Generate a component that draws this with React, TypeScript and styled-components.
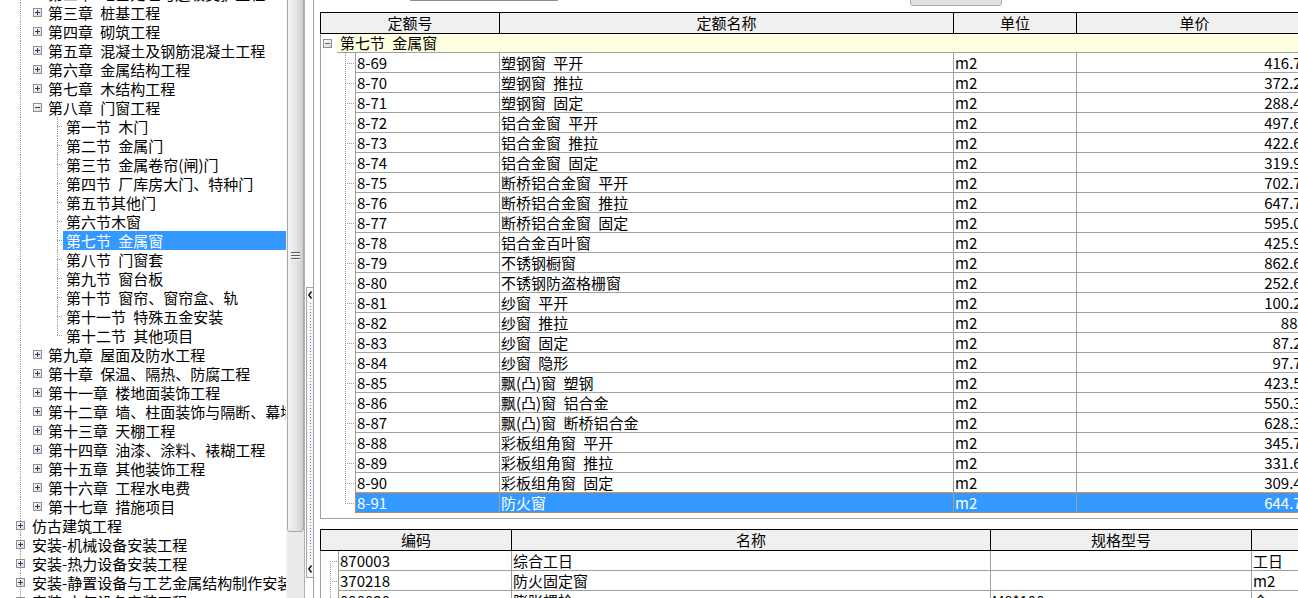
import React from "react";
import styled, { createGlobalStyle } from "styled-components";

const GlobalStyle = createGlobalStyle`
  html, body {
    margin: 0;
    padding: 0;
    background: #fff;
    overflow: hidden;
  }
  body {
    font-family: "Noto Sans CJK SC", "Noto Sans", sans-serif;
    font-size: 15px;
    color: #000;
  }
  * {
    box-sizing: border-box;
  }
`;

const GRID_LINE = "#a0a0a0";
const DOT = "#9a9a9a";
const vDots = `repeating-linear-gradient(to bottom, ${DOT} 0 1px, transparent 1px 2px)`;
const hDots = `repeating-linear-gradient(to right, ${DOT} 0 1px, transparent 1px 2px)`;

type VPart = "full" | "top" | "bottom";

interface GuideProps {
  $w: number;
  $v?: number;
  $part?: VPart;
  $h?: number;
  $mid?: number;
  $pad?: number;
}

// tree connector cell: dotted lines are painted as backgrounds
const Guide = styled.div<GuideProps>`
  flex: 0 0 ${(p) => p.$w}px;
  display: flex;
  align-items: center;
  padding-left: ${(p) => p.$pad || 0}px;
  background-repeat: no-repeat;
  ${(p) => {
    const imgs: string[] = [];
    const pos: string[] = [];
    const size: string[] = [];
    if (p.$v !== undefined) {
      const part = p.$part || "full";
      imgs.push(vDots);
      pos.push(`${p.$v}px ${part === "bottom" ? `${p.$mid}px` : "0"}`);
      size.push(part === "full" ? "1px 100%" : `1px ${part === "top" ? (p.$mid || 0) + 1 : 20}px`);
    }
    if (p.$h !== undefined) {
      imgs.push(hDots);
      pos.push(`${p.$h}px ${p.$mid}px`);
      size.push(`${p.$w - p.$h}px 1px`);
    }
    if (!imgs.length) return "";
    return `
      background-image: ${imgs.join(", ")};
      background-position: ${pos.join(", ")};
      background-size: ${size.join(", ")};
    `;
  }}
`;

const Shell = styled.div`
  display: flex;
  width: 1298px;
  height: 598px;
  overflow: hidden;
  background: #fff;
`;

/* ---------- left tree ---------- */

const TreePane = styled.div`
  flex: 0 0 286px;
  overflow: hidden;
`;

const TreeList = styled.div`
  margin-top: -16px;
`;

const TreeRow = styled.div`
  display: flex;
  height: 19px;
  padding-left: 12px;
`;

const TreeLabel = styled.div<{ $pad: number; $selected?: boolean }>`
  flex: 1;
  min-width: 0;
  padding-left: ${(p) => p.$pad}px;
  line-height: 19px;
  white-space: nowrap;
  overflow: hidden;
  word-spacing: 4px;
  background: ${(p) => (p.$selected ? "#3399ff" : "transparent")};
  color: ${(p) => (p.$selected ? "#fff" : "#000")};
`;

const BoxSvg = styled.svg<{ $ml: number }>`
  flex: 0 0 9px;
  display: block;
  margin-left: ${(p) => p.$ml}px;
`;

const ExpandBox = ({ open, ml = 4, sign = "#1f3d7a" }: { open?: boolean; ml?: number; sign?: string }) => (
  <BoxSvg $ml={ml} width="9" height="9" viewBox="0 0 9 9">
    <defs>
      <linearGradient id="boxfill" x1="0" y1="0" x2="1" y2="1">
        <stop offset="0" stopColor="#ffffff" />
        <stop offset="1" stopColor="#d4d4d4" />
      </linearGradient>
    </defs>
    <rect x="0.5" y="0.5" width="8" height="8" fill="url(#boxfill)" stroke="#8e8f8f" />
    <path d="M2 4.5h5" stroke={sign} />
    {!open && <path d="M4.5 2v5" stroke={sign} />}
  </BoxSvg>
);

type TreeItem = {
  text: string;
  level: 1 | 2 | 3;
  open?: boolean;
  last?: boolean;
  selected?: boolean;
};

const chapters = (list: string[]): TreeItem[] => list.map((text) => ({ text, level: 2 }));

const treeItems: TreeItem[] = [
  ...chapters([
    "第二章 地基处理与边坡支护工程",
    "第三章 桩基工程",
    "第四章 砌筑工程",
    "第五章 混凝土及钢筋混凝土工程",
    "第六章 金属结构工程",
    "第七章 木结构工程",
  ]),
  { text: "第八章 门窗工程", level: 2, open: true },
  { text: "第一节 木门", level: 3 },
  { text: "第二节 金属门", level: 3 },
  { text: "第三节 金属卷帘(闸)门", level: 3 },
  { text: "第四节 厂库房大门、特种门", level: 3 },
  { text: "第五节其他门", level: 3 },
  { text: "第六节木窗", level: 3 },
  { text: "第七节 金属窗", level: 3, selected: true },
  { text: "第八节 门窗套", level: 3 },
  { text: "第九节 窗台板", level: 3 },
  { text: "第十节 窗帘、窗帘盒、轨", level: 3 },
  { text: "第十一节 特殊五金安装", level: 3 },
  { text: "第十二节 其他项目", level: 3, last: true },
  ...chapters([
    "第九章 屋面及防水工程",
    "第十章 保温、隔热、防腐工程",
    "第十一章 楼地面装饰工程",
    "第十二章 墙、柱面装饰与隔断、幕墙工程",
    "第十三章 天棚工程",
    "第十四章 油漆、涂料、裱糊工程",
    "第十五章 其他装饰工程",
    "第十六章 工程水电费",
    "第十七章 措施项目",
  ]),
  { text: "仿古建筑工程", level: 1 },
  { text: "安装-机械设备安装工程", level: 1 },
  { text: "安装-热力设备安装工程", level: 1 },
  { text: "安装-静置设备与工艺金属结构制作安装工程", level: 1 },
  { text: "安装-电气设备安装工程", level: 1 },
];

/* ---------- scrollbar + splitter ---------- */

const VScroll = styled.div`
  flex: 0 0 19px;
  background: #ebebeb;
  border-left: 1px solid #f6f6f6;
  border-right: 1px solid #b0b0b0;
  overflow: hidden;
`;

const Thumb = styled.div`
  height: 552px;
  margin-top: -20px;
  border: 1px solid #a9a9a9;
  border-radius: 0 0 3px 3px;
  background: linear-gradient(to right, #f3f3f3 0%, #e4e4e4 55%, #cdcdcd 100%);
  display: flex;
  align-items: center;
  justify-content: center;
`;

const Grip = () => (
  <svg width="9" height="8" viewBox="0 0 9 8">
    {[0, 3, 6].map((y) => (
      <g key={y}>
        <path d={`M0 ${y + 0.5}h9`} stroke="#5e5e5e" />
        <path d={`M0 ${y + 1.5}h9`} stroke="#f4f4f4" />
      </g>
    ))}
  </svg>
);

const SplitBar = styled.div`
  flex: 0 0 9px;
  padding-left: 1px;
  border-right: 1px solid ${GRID_LINE};
  background: #fff;
`;

const SplitHandle = styled.div`
  margin-top: 287px;
  height: 291px;
  border: 1px solid #a8a8a8;
  border-right: none;
  background: #f7f7f7;
  display: flex;
  flex-direction: column;
  align-items: center;
  padding: 3px 0 4px;
`;

const HandleDots = styled.div`
  flex: 1;
  width: 1px;
  margin: 4px 0;
  background: repeating-linear-gradient(to bottom, #3f8ee0 0 1px, transparent 1px 3px);
`;

const Chevron = () => (
  <svg width="4" height="8" viewBox="0 0 4 8">
    <path d="M3.5 0.5L0.8 4L3.5 7.5" fill="none" stroke="#000" strokeWidth="1.3" />
  </svg>
);

/* ---------- right side ---------- */

const RightPane = styled.div`
  flex: 1;
  min-width: 0;
  padding-left: 6px;
  display: flex;
  flex-direction: column;
  overflow: hidden;
`;

const Toolbar = styled.div`
  flex: 0 0 6px;
  display: flex;
  align-items: flex-end;
  overflow: hidden;
`;

const SearchBox = styled.div`
  flex: 0 0 148px;
  height: 20px;
  margin: 0 0 5px 90px;
  border: 1px solid #b8b8b8;
  border-bottom: 2px solid #8c8c8c;
  background: #fff;
`;

const ToolButton = styled.div`
  flex: 0 0 92px;
  height: 22px;
  margin-left: 352px;
  border: 1px solid #adadad;
  border-radius: 3px;
  background: #e1e1e1;
`;

const GridBox = styled.div<{ $h?: number; $top: number }>`
  flex: ${(p) => (p.$h ? `0 0 ${p.$h}px` : "1")};
  margin-top: ${(p) => p.$top}px;
  display: flex;
  flex-direction: column;
  overflow: hidden;
  ${(p) => (p.$h ? `border-bottom: 1px solid ${GRID_LINE};` : "")}
`;

const GridHead = styled.div`
  display: flex;
  flex: 0 0 22px;
  border: 1px solid #000;
  border-right: none;
  background: #f0f0f0;
`;

const HeadCell = styled.div<{ $w: number }>`
  flex: 0 0 ${(p) => p.$w}px;
  border-right: 1px solid #000;
  text-align: center;
  line-height: 20px;
  white-space: nowrap;
`;

const GridBody = styled.div`
  flex: 1;
  border-left: 1px solid ${GRID_LINE};
`;

const GroupRow = styled.div`
  display: flex;
  height: 19px;
`;

const GroupLabel = styled.div`
  flex: 0 0 1000px;
  padding-left: 3px;
  line-height: 18px;
  background: #ffffe1;
  border-bottom: 1px solid ${GRID_LINE};
  word-spacing: 4px;
  white-space: nowrap;
`;

const DataRow = styled.div`
  display: flex;
  height: 20px;
`;

const RowCells = styled.div<{ $selected?: boolean }>`
  display: flex;
  background: ${(p) => (p.$selected ? "#3399ff" : "transparent")};
  color: ${(p) => (p.$selected ? "#fff" : "#000")};
  outline: ${(p) => (p.$selected ? "1px dotted #d0782a" : "none")};
  outline-offset: -1px;
`;

const Cell = styled.div<{ $w: number; $right?: boolean; $first?: boolean }>`
  flex: 0 0 ${(p) => p.$w}px;
  border-right: 1px solid ${GRID_LINE};
  border-bottom: 1px solid ${GRID_LINE};
  border-left: ${(p) => (p.$first ? `1px solid ${GRID_LINE}` : "none")};
  padding: ${(p) => (p.$right ? "0 2px 0 0" : "0 0 0 1px")};
  text-align: ${(p) => (p.$right ? "right" : "left")};
  line-height: 19px;
  white-space: nowrap;
  overflow: hidden;
  word-spacing: 4px;
`;

const quotaCols = [179, 454, 123, 236];

const quotas: [string, string, string, string][] = [
  ["8-69", "塑钢窗 平开", "m2", "416.76"],
  ["8-70", "塑钢窗 推拉", "m2", "372.25"],
  ["8-71", "塑钢窗 固定", "m2", "288.43"],
  ["8-72", "铝合金窗 平开", "m2", "497.61"],
  ["8-73", "铝合金窗 推拉", "m2", "422.63"],
  ["8-74", "铝合金窗 固定", "m2", "319.90"],
  ["8-75", "断桥铝合金窗 平开", "m2", "702.75"],
  ["8-76", "断桥铝合金窗 推拉", "m2", "647.72"],
  ["8-77", "断桥铝合金窗 固定", "m2", "595.05"],
  ["8-78", "铝合金百叶窗", "m2", "425.93"],
  ["8-79", "不锈钢橱窗", "m2", "862.62"],
  ["8-80", "不锈钢防盗格栅窗", "m2", "252.69"],
  ["8-81", "纱窗 平开", "m2", "100.29"],
  ["8-82", "纱窗 推拉", "m2", "88.7"],
  ["8-83", "纱窗 固定", "m2", "87.25"],
  ["8-84", "纱窗 隐形", "m2", "97.78"],
  ["8-85", "飘(凸)窗 塑钢", "m2", "423.56"],
  ["8-86", "飘(凸)窗 铝合金", "m2", "550.31"],
  ["8-87", "飘(凸)窗 断桥铝合金", "m2", "628.34"],
  ["8-88", "彩板组角窗 平开", "m2", "345.75"],
  ["8-89", "彩板组角窗 推拉", "m2", "331.62"],
  ["8-90", "彩板组角窗 固定", "m2", "309.45"],
  ["8-91", "防火窗", "m2", "644.71"],
];

const resCols = [191, 479, 261, 300];

const resources: [string, string, string, string][] = [
  ["870003", "综合工日", "", "工日"],
  ["370218", "防火固定窗", "", "m2"],
  ["090030", "膨胀螺栓", "M8*100", "个"],
];

const App: React.FC = () => {
  return (
    <>
      <GlobalStyle />
      <Shell>
        <TreePane>
          <TreeList>
            {treeItems.map((item) => (
              <TreeRow key={item.text}>
                <Guide $w={17} $v={8}>
                  {item.level === 1 && <ExpandBox open={item.open} />}
                </Guide>
                {item.level >= 2 && (
                  <Guide $w={17}>{item.level === 2 && <ExpandBox open={item.open} />}</Guide>
                )}
                {item.level === 3 && (
                  <Guide $w={17} $v={11} $part={item.last ? "top" : "full"} $h={11} $mid={9} />
                )}
                <TreeLabel $pad={item.level === 2 ? 2 : 3} $selected={item.selected}>
                  {item.text}
                </TreeLabel>
              </TreeRow>
            ))}
          </TreeList>
        </TreePane>

        <VScroll>
          <Thumb>
            <Grip />
          </Thumb>
        </VScroll>

        <SplitBar>
          <SplitHandle>
            <Chevron />
            <HandleDots />
            <Chevron />
          </SplitHandle>
        </SplitBar>

        <RightPane>
          <Toolbar>
            <SearchBox />
            <ToolButton />
          </Toolbar>

          <GridBox $h={507} $top={6}>
            <GridHead>
              {["定额号", "定额名称", "单位", "单价"].map((t, i) => (
                <HeadCell key={t} $w={quotaCols[i]}>
                  {t}
                </HeadCell>
              ))}
            </GridHead>
            <GridBody>
              <GroupRow>
                <Guide $w={16} $pad={2}>
                  <ExpandBox open ml={0} sign="#6a6a6a" />
                </Guide>
                <GroupLabel>第七节 金属窗</GroupLabel>
              </GroupRow>
              {quotas.map(([code, name, unit, price], i) => {
                const last = i === quotas.length - 1;
                return (
                  <DataRow key={code}>
                    <Guide $w={34} $v={24} $part={last ? "top" : "full"} $h={24} $mid={10} />
                    <RowCells $selected={last}>
                      <Cell $w={quotaCols[0] - 34} $first>
                        {code}
                      </Cell>
                      <Cell $w={quotaCols[1]}>{name}</Cell>
                      <Cell $w={quotaCols[2]}>{unit}</Cell>
                      <Cell $w={quotaCols[3]} $right>
                        {price}
                      </Cell>
                    </RowCells>
                  </DataRow>
                );
              })}
            </GridBody>
          </GridBox>

          <GridBox $top={10}>
            <GridHead>
              {["编码", "名称", "规格型号", "单位"].map((t, i) => (
                <HeadCell key={t} $w={resCols[i]}>
                  {t}
                </HeadCell>
              ))}
            </GridHead>
            <GridBody>
              {resources.map(([code, name, spec, unit], i) => (
                <DataRow key={code}>
                  <Guide $w={17} $v={9} $part={i === 0 ? "bottom" : "full"} $h={9} $mid={10} />
                  <RowCells>
                    <Cell $w={resCols[0] - 17} $first>
                      {code}
                    </Cell>
                    <Cell $w={resCols[1]}>{name}</Cell>
                    <Cell $w={resCols[2]}>{spec}</Cell>
                    <Cell $w={resCols[3]}>{unit}</Cell>
                  </RowCells>
                </DataRow>
              ))}
            </GridBody>
          </GridBox>
        </RightPane>
      </Shell>
    </>
  );
};

export default App;
